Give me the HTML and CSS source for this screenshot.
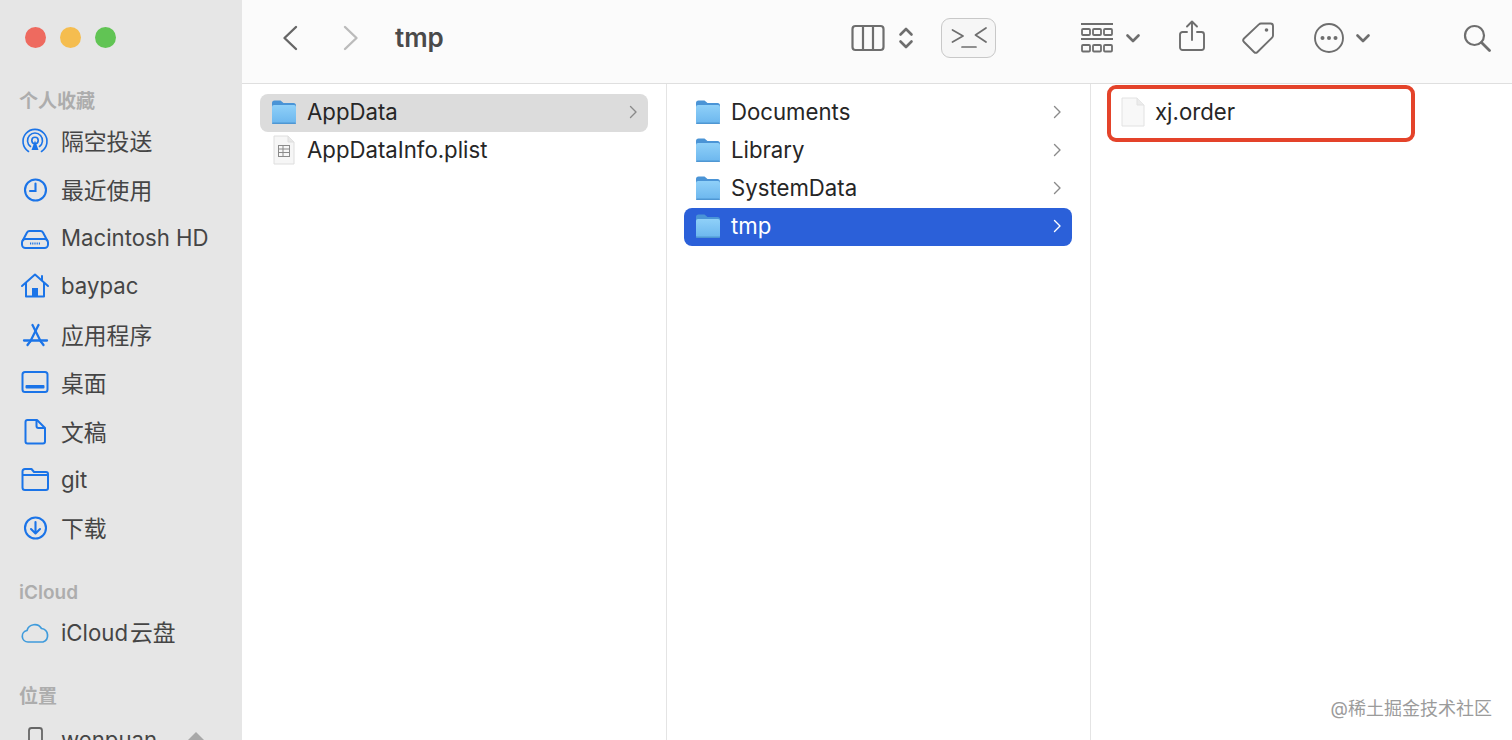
FILE: index.html
```html
<!DOCTYPE html>
<html lang="zh">
<head>
<meta charset="utf-8">
<title>tmp</title>
<link rel="stylesheet" href="styles.css">
</head>
<body>
<svg class="defs" width="0" height="0" aria-hidden="true">
  <defs>
    <linearGradient id="fg" x1="0" y1="0" x2="0" y2="1"><stop offset="0" stop-color="#8fd0f8"/><stop offset="1" stop-color="#6bb6ee"/></linearGradient>
    <symbol id="folder" viewBox="0 0 28 26">
      <path d="M2 4a2.500 2.500 0 0 1 2.500-2.500h6l3 2.500h10a2.500 2.500 0 0 1 2.500 2.500v4h-24z" fill="#4a94d6"/>
      <rect x="2" y="6" width="24" height="19" rx="2" fill="url(#fg)"/>
      <rect x="2" y="23.500" width="24" height="1.500" rx=".7" fill="#4f97d3"/>
    </symbol>
    <symbol id="chev" viewBox="0 0 10 16"><path d="M2.500 2.500 8 8l-5.500 5.500" fill="none" stroke="currentColor" stroke-width="1.400" stroke-linecap="round" stroke-linejoin="round"/></symbol>
  </defs>
</svg>
<div class="window">
  <aside class="sidebar">
    <div class="lights"><span class="light red"></span><span class="light yellow"></span><span class="light green"></span></div>
    <h2 class="side-head fav-head">个人收藏</h2>
    <ul class="side-list fav-list">
      <li class="side-item"><svg class="side-icon" viewBox="0 0 30 30"><g fill="none" stroke="currentColor" stroke-width="1.600" stroke-linecap="round"><path d="M8.500 25.500A12 12 0 1 1 21.500 25.500"/><path d="M10.500 20.500A7.500 7.500 0 1 1 19.500 20.500"/><circle cx="15" cy="14.500" r="3.200"/></g><path d="M15 14.500 18.500 24h-7z" fill="currentColor"/></svg><span class="cjk">隔空投送</span></li>
      <li class="side-item"><svg class="side-icon" viewBox="0 0 30 30"><g fill="none" stroke="currentColor" stroke-width="2.100" stroke-linecap="round"><circle cx="15.500" cy="15" r="10.500"/><path d="M15.500 8.500V16H10"/></g></svg><span class="cjk">最近使用</span></li>
      <li class="side-item"><svg class="side-icon" viewBox="0 0 30 30"><g fill="none" stroke="currentColor" stroke-width="2" stroke-linejoin="round"><path d="M2.500 18 7 9.500a3 3 0 0 1 2.500-1.500h11a3 3 0 0 1 2.500 1.500L27.500 18"/><rect x="2" y="16" width="26" height="9" rx="3.500"/></g><path d="M10 20.500h11" stroke="currentColor" stroke-width="2" stroke-dasharray="1.200 1"/></svg><span>Macintosh HD</span></li>
      <li class="side-item"><svg class="side-icon" viewBox="0 0 30 30"><g fill="none" stroke="currentColor" stroke-width="2" stroke-linecap="round" stroke-linejoin="round"><path d="M2 15 15 3.500 28 15"/><path d="M6 12v13.500h18V12"/><path d="M22 5v4"/></g><rect x="12" y="17" width="6" height="8.500" fill="currentColor"/></svg><span>baypac</span></li>
      <li class="side-item"><svg class="side-icon" viewBox="0 0 30 30"><g fill="none" stroke="currentColor" stroke-width="2.300" stroke-linecap="round"><path d="M4 20.500h23"/><path d="M12.500 5 21 22"/><path d="M18.500 5 10 22"/><path d="M7.500 25l1.500-2"/><path d="M23.500 25l-1.500-2"/></g></svg><span class="cjk">应用程序</span></li>
      <li class="side-item"><svg class="side-icon" viewBox="0 0 30 30"><rect x="2.500" y="4" width="25" height="20" rx="2.500" fill="none" stroke="currentColor" stroke-width="2"/><rect x="5.500" y="17" width="19" height="3.500" rx="1" fill="currentColor"/></svg><span class="cjk">桌面</span></li>
      <li class="side-item"><svg class="side-icon" viewBox="0 0 30 30"><g fill="none" stroke="currentColor" stroke-width="2" stroke-linejoin="round"><path d="M7.500 3h9.500l8 8v13.500a2 2 0 0 1-2 2H7.500a2 2 0 0 1-2-2V5a2 2 0 0 1 2-2z"/><path d="M16.500 3v6a2 2 0 0 0 2 2H25"/></g></svg><span class="cjk">文稿</span></li>
      <li class="side-item"><svg class="side-icon" viewBox="0 0 30 30"><path d="M2.500 9V6.500A2.500 2.500 0 0 1 5 4h6.500l2.500 3h12a2 2 0 0 1 2 2v14a2 2 0 0 1-2 2H5a2.500 2.500 0 0 1-2.500-2.500zM2.500 10h25.500" fill="none" stroke="currentColor" stroke-width="2" stroke-linejoin="round"/></svg><span>git</span></li>
      <li class="side-item"><svg class="side-icon" viewBox="0 0 30 30"><g fill="none" stroke="currentColor" stroke-width="2.100" stroke-linecap="round" stroke-linejoin="round"><circle cx="15.500" cy="15" r="10.500"/><path d="M15.500 9v11M11 16l4.500 4.500L20 16"/></g></svg><span class="cjk">下载</span></li>
    </ul>
    <h2 class="side-head cloud-head">iCloud</h2>
    <ul class="side-list cloud-list">
      <li class="side-item"><svg class="side-icon cloud" viewBox="0 0 30 30"><path d="M8 24a5.800 5.800 0 0 1-1-11.500A8 8 0 0 1 21.500 10.500 7 7 0 0 1 23 24z" fill="none" stroke="currentColor" stroke-width="1.700" stroke-linejoin="round"/></svg><span>iCloud<span class="cjk-tail">云盘</span></span></li>
    </ul>
    <h2 class="side-head place-head">位置</h2>
    <ul class="side-list place-list">
      <li class="side-item device"><svg class="side-icon" viewBox="0 0 30 30"><rect x="9" y="3" width="13" height="24" rx="2.500" fill="none" stroke="#666" stroke-width="1.800"/></svg><span>wenpuan</span><i class="eject"></i></li>
    </ul>
  </aside>
  <main class="main">
    <header class="toolbar">
      <svg class="tb back" viewBox="0 0 16 26"><path d="M14 2 2.500 13 14 24" fill="none" stroke="#666" stroke-width="2.400" stroke-linecap="round" stroke-linejoin="round"/></svg>
      <svg class="tb forward" viewBox="0 0 16 26"><path d="M2 2l11.500 11L2 24" fill="none" stroke="#bbb" stroke-width="2.400" stroke-linecap="round" stroke-linejoin="round"/></svg>
      <h1 class="title">tmp</h1>
      <svg class="tb columns" viewBox="0 0 34 28"><g fill="none" stroke="#6e6e6e" stroke-width="2.200"><rect x="1.500" y="2" width="31" height="24" rx="3"/><path d="M12 2v24M22 2v24"/></g></svg>
      <svg class="tb updown" viewBox="0 0 16 24"><path d="M2.500 8.500 8 3l5.500 5.500M2.500 15.500 8 21l5.500-5.500" fill="none" stroke="#6e6e6e" stroke-width="2.600" stroke-linecap="round" stroke-linejoin="round"/></svg>
      <div class="term"><svg viewBox="0 0 36 24"><path d="M1.500 4 12 10 1.500 16M35 2 24.500 9l10.500 7M11 21h14" fill="none" stroke="#6e6e6e" stroke-width="1.700" stroke-linecap="round" stroke-linejoin="round"/></svg></div>
      <svg class="tb grid" viewBox="0 0 32 30"><g fill="none" stroke="#6e6e6e" stroke-width="1.800"><path d="M0 1h32M0 16h32"/><rect x="1" y="6" width="8" height="6" rx="1"/><rect x="12" y="6" width="8" height="6" rx="1"/><rect x="23" y="6" width="8" height="6" rx="1"/><rect x="1" y="22" width="8" height="6.500" rx="1"/><rect x="12" y="22" width="8" height="6.500" rx="1"/><rect x="23" y="22" width="8" height="6.500" rx="1"/></g></svg>
      <svg class="tb caret grid-caret" viewBox="0 0 14 9"><path d="M1.500 1.500 7 7l5.500-5.500" fill="none" stroke="#6e6e6e" stroke-width="2.600" stroke-linecap="round" stroke-linejoin="round"/></svg>
      <svg class="tb share" viewBox="0 0 26 32"><g fill="none" stroke="#6e6e6e" stroke-width="1.900" stroke-linecap="round" stroke-linejoin="round"><path d="M8 12H3.500A2.500 2.500 0 0 0 1 14.500v13A2.500 2.500 0 0 0 3.500 30h19a2.500 2.500 0 0 0 2.500-2.500v-13a2.500 2.500 0 0 0-2.500-2.500H18"/><path d="M13 20V1.500M8 6.500l5-5 5 5"/></g></svg>
      <svg class="tb tag" viewBox="0 0 34 34"><g fill="none" stroke="#6e6e6e" stroke-width="1.900" stroke-linejoin="round"><path d="M20 2.500h9.500a2.500 2.500 0 0 1 2.500 2.500v9.500a3 3 0 0 1-.9 2.100L16.500 31a2.500 2.500 0 0 1-3.500 0L3 21a2.500 2.500 0 0 1 0-3.500L17.900 3.400a3 3 0 0 1 2.100-.9z"/></g><circle cx="25.500" cy="9" r="1.800" fill="#6e6e6e"/></svg>
      <svg class="tb more" viewBox="0 0 30 30"><circle cx="15" cy="15" r="14" fill="none" stroke="#6e6e6e" stroke-width="1.900"/><g fill="#6e6e6e"><circle cx="8.500" cy="15" r="2"/><circle cx="15" cy="15" r="2"/><circle cx="21.500" cy="15" r="2"/></g></svg>
      <svg class="tb caret more-caret" viewBox="0 0 14 9"><path d="M1.500 1.500 7 7l5.500-5.500" fill="none" stroke="#6e6e6e" stroke-width="2.600" stroke-linecap="round" stroke-linejoin="round"/></svg>
      <svg class="tb search" viewBox="0 0 28 28"><g fill="none" stroke="#6e6e6e" stroke-width="2.200" stroke-linecap="round"><circle cx="11.500" cy="11.500" r="9.500"/><path d="M18.500 18.500 26.500 26.500" stroke-width="2.800"/></g></svg>
    </header>
    <section class="browser">
      <div class="col col-one">
        <div class="row row-muted"><svg class="ficon"><use href="#folder"/></svg><span class="name">AppData</span><svg class="chev"><use href="#chev"/></svg></div>
        <div class="row"><svg class="ficon plist" viewBox="0 0 28 30"><path d="M4 1h14l6 6v22H4z" fill="#f6f6f6" stroke="#dedede"/><path d="M18 1v6h6" fill="#e8e8e8" stroke="#dedede"/><g fill="none" stroke="#8a8a8a" stroke-width="1"><rect x="8.500" y="10.500" width="11" height="11"/><path d="M8.500 14h11M8.500 17.500h11M13 10.500v11"/></g></svg><span class="name">AppDataInfo.plist</span></div>
      </div>
      <div class="col col-two">
        <div class="row"><svg class="ficon"><use href="#folder"/></svg><span class="name">Documents</span><svg class="chev"><use href="#chev"/></svg></div>
        <div class="row"><svg class="ficon"><use href="#folder"/></svg><span class="name">Library</span><svg class="chev"><use href="#chev"/></svg></div>
        <div class="row"><svg class="ficon"><use href="#folder"/></svg><span class="name">SystemData</span><svg class="chev"><use href="#chev"/></svg></div>
        <div class="row row-active"><svg class="ficon"><use href="#folder"/></svg><span class="name">tmp</span><svg class="chev"><use href="#chev"/></svg></div>
      </div>
      <div class="col col-three">
        <div class="row"><svg class="ficon doc" viewBox="0 0 24 30"><path d="M1 1h15l7 7v21H1z" fill="#f8f8f8" stroke="#e2e2e2"/><path d="M16 1v7h7" fill="#ececec" stroke="#e2e2e2"/></svg><span class="name">xj.order</span></div>
        <div class="callout"></div>
      </div>
      <div class="watermark">@稀土掘金技术社区</div>
    </section>
  </main>
</div>
</body>
</html>
```
FILE: styles.css
```css
* { box-sizing: border-box; }
html, body { margin: 0; height: 740px; overflow: hidden; background: #fff; }
body { font-family: Inter, "Noto Sans CJK SC", sans-serif; color: #262626; }
.defs { position: absolute; }
.window { display: flex; height: 740px; width: 1512px; }

.sidebar { width: 242px; flex: none; background: #e6e6e6; padding: 27px 0 0; overflow: hidden; }
.lights { display: flex; gap: 14px; padding-left: 25px; height: 22px; }
.light { width: 21px; height: 21px; border-radius: 50%; }
.red { background: #ee6a5f; }
.yellow { background: #f5bd4f; }
.green { background: #61c454; }
.side-head { margin: 0; padding-left: 19px; font-size: 19px; font-weight: 600; color: #adadad; line-height: 24px; }
.fav-head { margin-top: 41px; }
.cloud-head { margin-top: 28px; }
.place-head { margin-top: 28px; }
.side-list { list-style: none; margin: 0; padding: 0; }
.fav-list { margin-top: 3px; }
.cloud-list { margin-top: 4px; }
.place-list { margin-top: 7px; }
.side-item { display: flex; align-items: center; height: 48.4px; padding-left: 20px; font-size: 22.2px; line-height: 30px; color: #454545; white-space: nowrap; }
.cjk { font-size: 22.8px; padding-top: 2px; }
.cjk-tail { font-size: 22.8px; margin-left: 2px; }
.side-icon { width: 30px; height: 30px; margin-right: 11px; color: #1b74e8; flex: none; }
.side-icon.cloud { color: #3f9bdc; }
.device { position: relative; }
.eject { position: absolute; left: 188px; top: 16px; border: 8px solid transparent; border-top: 0; border-bottom: 8px solid #a8a8a8; }

.main { flex: 1; min-width: 0; display: flex; flex-direction: column; }
.toolbar { height: 84px; flex: none; display: flex; align-items: center; background: #fbfbfb; border-bottom: 1px solid #dfdfdf; padding-bottom: 8px; }
.tb { flex: none; display: block; }
.back { width: 16px; height: 26px; margin-left: 40px; }
.forward { width: 16px; height: 26px; margin-left: 45px; }
.title { margin: 0 0 0 36px; width: 48px; font-size: 26px; font-weight: 600; color: #4a4a4a; line-height: 32px; }
.columns { width: 34px; height: 28px; margin-left: 408px; }
.updown { width: 16px; height: 24px; margin-left: 13px; }
.term { flex: none; width: 55px; height: 40px; margin-left: 27px; border: 1px solid #c8c8c8; border-radius: 9px; background: #f6f6f6; display: flex; align-items: center; justify-content: center; }
.term svg { width: 36px; height: 24px; display: block; }
.grid { width: 32px; height: 30px; margin-left: 85px; }
.caret { width: 14px; height: 9px; margin-top: 1px; }
.grid-caret { margin-left: 13px; }
.share { width: 26px; height: 32px; margin-left: 39px; margin-top: -3px; }
.tag { width: 34px; height: 34px; margin-left: 36px; }
.more { width: 30px; height: 30px; margin-left: 39px; }
.more-caret { margin-left: 12px; }
.search { width: 28px; height: 28px; margin-left: 93px; }

.browser { flex: 1; display: flex; position: relative; }
.col { flex: none; padding: 10px 18px 0 17px; position: relative; }
.col-one { width: 425px; padding-left: 18px; border-right: 1px solid #e4e4e4; }
.col-two { width: 424px; border-right: 1px solid #e4e4e4; }
.col-three { flex: 1; padding-left: 19px; }
.row { display: flex; align-items: center; height: 38px; border-radius: 8px; padding: 0 10px 2px; font-size: 22.2px; line-height: 30px; white-space: nowrap; color: #262626; }
.row-muted { background: #dcdcdc; }
.row-active { background: #2b60d9; color: #fff; }
.ficon { width: 28px; height: 26px; flex: none; margin-right: 9px; }
.ficon.plist { height: 30px; }
.ficon.doc { width: 24px; height: 30px; margin-left: 1px; margin-right: 10px; }
.name { flex: 1; }
.chev { width: 10px; height: 16px; flex: none; color: #8a8a8a; }
.row-active .chev { color: #fff; }
.callout { position: absolute; left: 16px; top: 1px; width: 308px; height: 57px; border: 4px solid #e4432a; border-radius: 9px; }
.watermark { position: absolute; right: 20px; top: 613px; font-size: 18px; line-height: 24px; color: #9b9b9b; white-space: nowrap; }
```
